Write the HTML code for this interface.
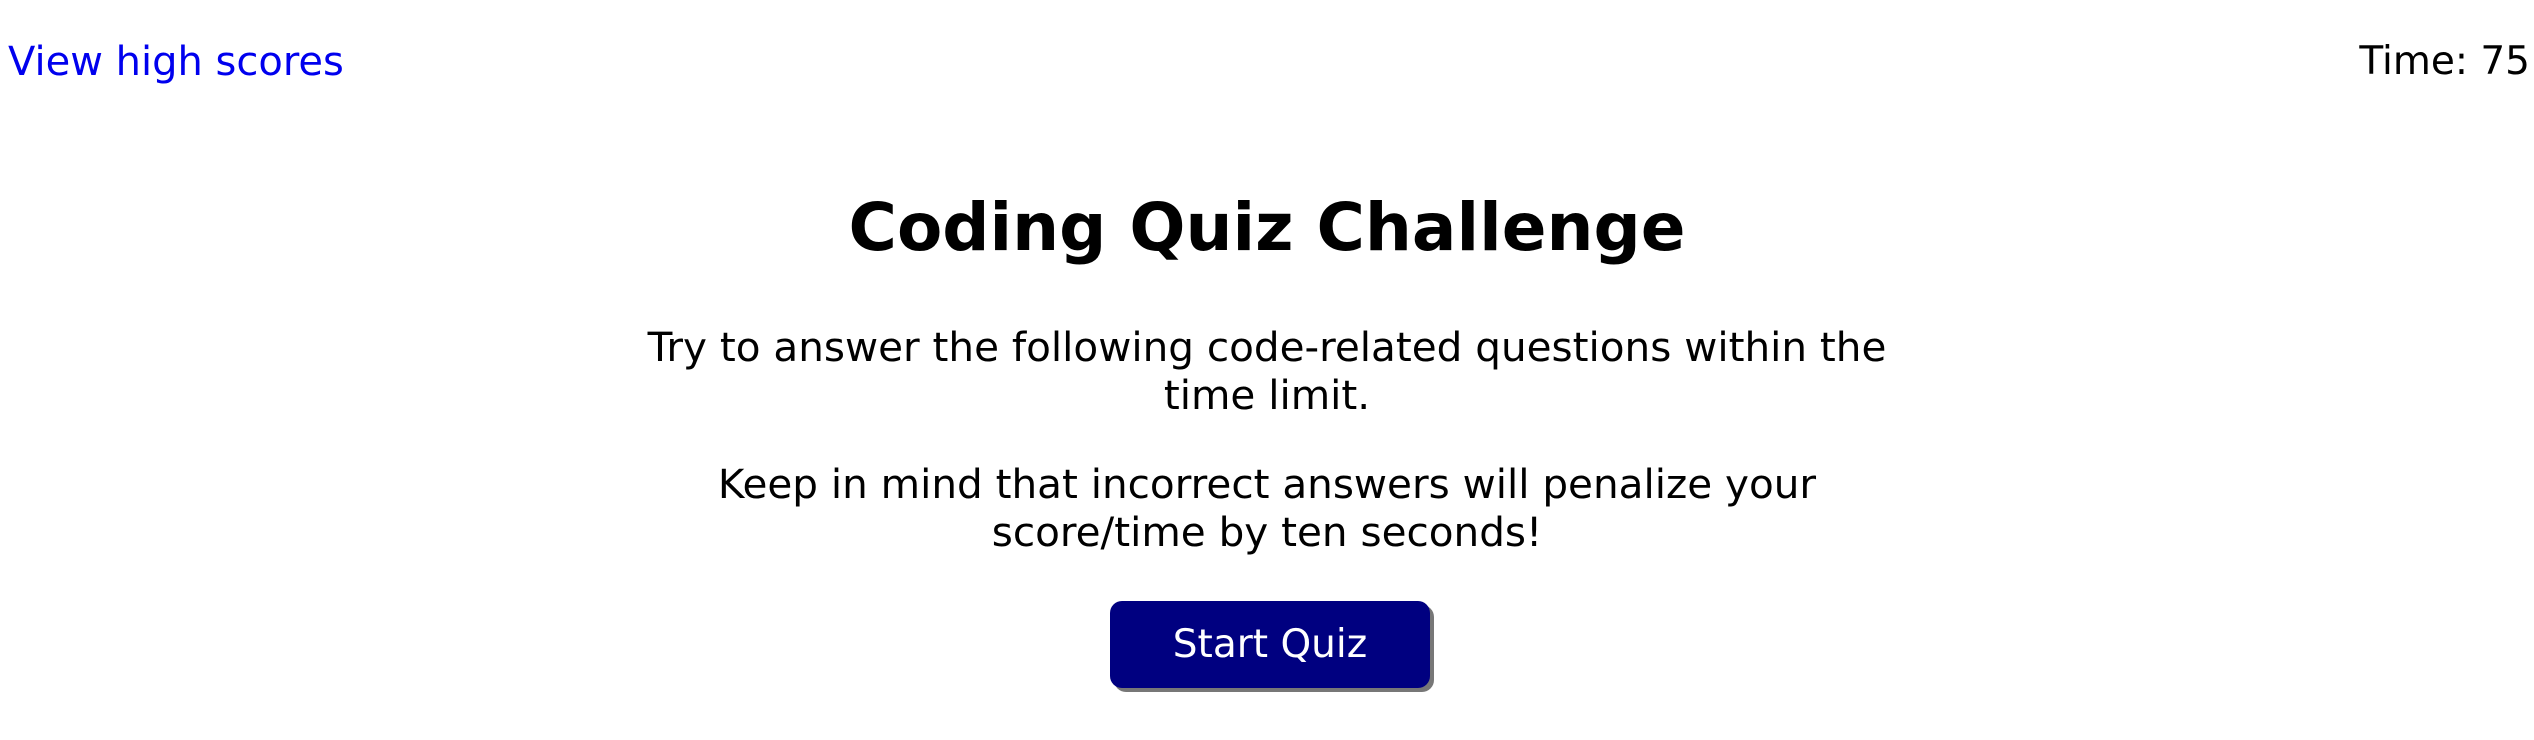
<!DOCTYPE html>
<html><head><style>
body{margin:0;width:2534px;height:740px;background:#fff;font-family:"DejaVu Sans","Liberation Sans",sans-serif;overflow:hidden;position:relative}
.hs{position:absolute;left:8px;top:39px;font-size:40px;color:#0000ee;text-decoration:none}
.tm{position:absolute;right:4px;top:39px;font-size:39px;color:#000}
h1{position:absolute;left:0;right:0;top:186px;margin:0;text-align:center;font-size:66px;font-weight:bold;line-height:84px}
p{position:absolute;left:50%;transform:translateX(-50%);width:1265px;margin:0;text-align:center;font-size:40.5px;line-height:48px}
.p1{top:323px}.p2{top:460px}
.btn{position:absolute;left:1110px;top:601px;width:320px;height:87px;background:#000080;color:#fff;border-radius:12px;box-shadow:4px 4px 0 #777;font-size:39px;text-align:center;line-height:87px}
</style></head><body>
<a class="hs" href="#">View high scores</a>
<div class="tm">Time: 75</div>
<h1>Coding Quiz Challenge</h1>
<p class="p1">Try to answer the following code-related questions within the time limit.</p>
<p class="p2">Keep in mind that incorrect answers will penalize your score/time by ten seconds!</p>
<div class="btn">Start Quiz</div>
</body></html>
